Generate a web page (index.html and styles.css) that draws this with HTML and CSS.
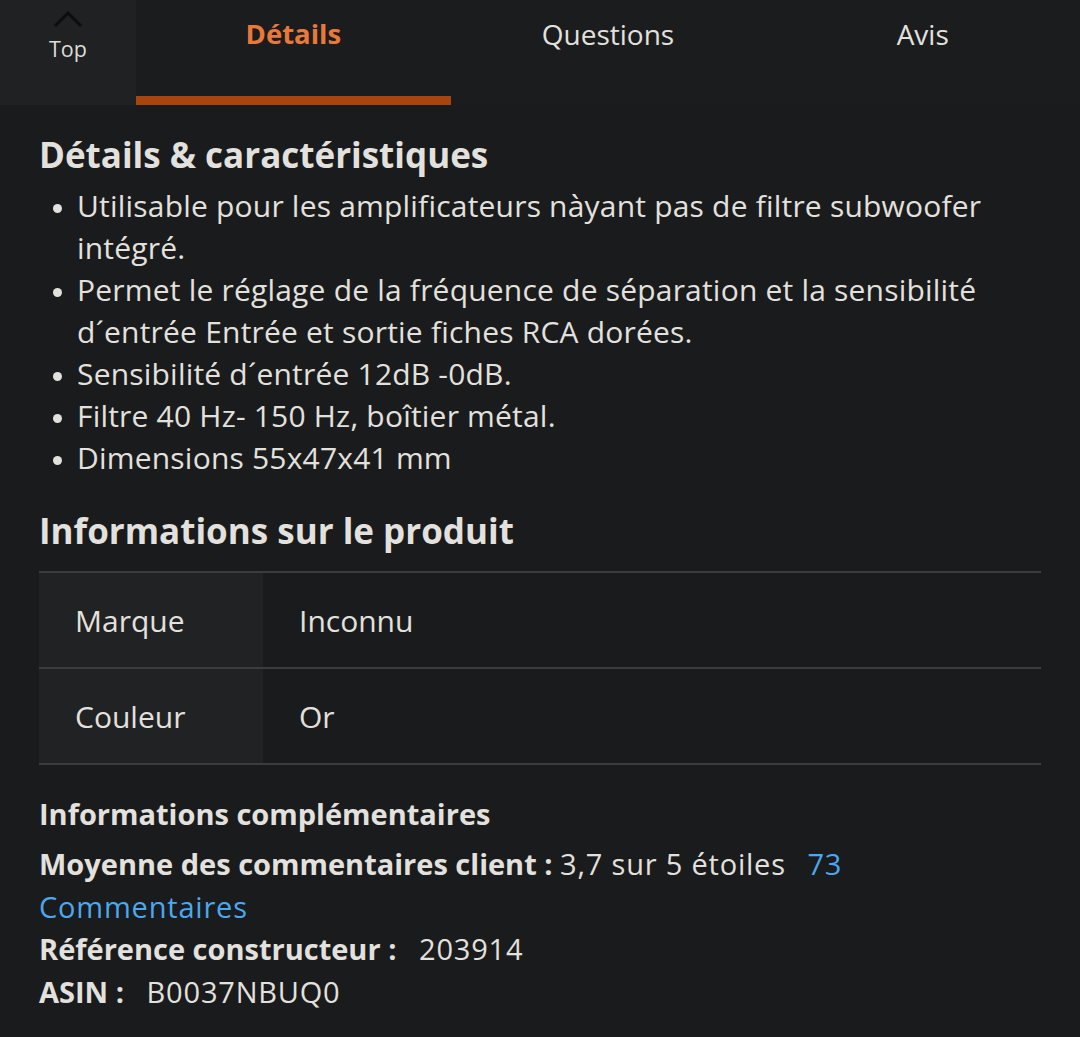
FILE: index.html
```html
<!DOCTYPE html>
<html lang="fr">
<head>
  <meta charset="UTF-8">
  <meta name="viewport" content="width=device-width, initial-scale=1.0">
  <title>Détails du produit</title>
  <link rel="stylesheet" href="styles.css">
</head>
<body>
  <!-- Barre d'onglets -->
  <div class="tabbar">
    <div class="top-btn">
      <svg class="chevron" width="32" height="20" viewBox="0 0 32 20">
        <path d="M3 18 L16 5 L29 18" fill="none" stroke="#0c0d0e" stroke-width="3"/>
      </svg>
      <span>Top</span>
    </div>
    <div class="tab active">Détails</div>
    <div class="tab">Questions</div>
    <div class="tab">Avis</div>
  </div>

  <div class="content">
    <h2>Détails &amp; caractéristiques</h2>
    <ul class="features">
      <li>Utilisable pour les amplificateurs nàyant pas de filtre subwoofer intégré.</li>
      <li>Permet le réglage de la fréquence de séparation et la sensibilité <span class="nowrap">d´entrée</span> Entrée et sortie fiches RCA dorées.</li>
      <li>Sensibilité d´entrée 12dB -0dB.</li>
      <li>Filtre 40 Hz- 150 Hz, boîtier métal.</li>
      <li>Dimensions 55x47x41 mm</li>
    </ul>

    <h2 class="info-title">Informations sur le produit</h2>
    <table class="specs">
      <tr><th>Marque</th><td>Inconnu</td></tr>
      <tr><th>Couleur</th><td>Or</td></tr>
    </table>

    <div class="extra">
      <h3>Informations complémentaires</h3>
      <p><b>Moyenne des commentaires client :</b> <span class="val">3,7 sur 5 étoiles</span> <a href="#" class="val link">73</a> <a href="#" class="val">Commentaires</a></p>
      <p><b>Référence constructeur :</b> &nbsp; <span class="val">203914</span></p>
      <p><b>ASIN :</b> &nbsp; <span class="val">B0037NBUQ0</span></p>
    </div>
  </div>
</body>
</html>
```

FILE: styles.css
```css
body {
  margin: 0;
  padding: 0;
  background: #1a1b1d;
  color: #e3e1de;
  font-family: 'Open Sans', sans-serif;
  overflow: hidden;
}

/* Onglets */
.tabbar {
  display: flex;
  height: 105px;
  background: #1b1c1e;
}

.top-btn {
  width: 136px;
  background: #1f2123;
  display: flex;
  flex-direction: column;
  align-items: center;
  padding-top: 8px;
  box-sizing: border-box;
}

.top-btn span {
  font-size: 21.5px;
  color: #dedcd9;
  line-height: 26px;
  margin-top: 8px;
}

.tab {
  flex: 1;
  text-align: center;
  font-size: 28px;
  line-height: 28px;
  padding-top: 20px;
  color: #e3e1de;
  box-sizing: border-box;
}

.tab.active {
  color: #e8793a;
  font-weight: 700;
  font-size: 27.5px;
  border-bottom: 9px solid #a8450f;
}

/* Contenu */
.content {
  padding: 0 39px;
}

h2 {
  font-size: 35px;
  font-weight: 700;
  margin: 0;
  line-height: 48px;
  padding-top: 26px;
}

.features {
  margin: 6px 0 0;
  padding-left: 38px;
  font-size: 30px;
  letter-spacing: 0.2px;
  line-height: 42px;
}

.features li::marker {
  font-size: 24px;
}

.nowrap {
  white-space: nowrap;
}

.info-title {
  padding-top: 28px;
  padding-bottom: 16px;
}

.specs {
  width: 100%;
  border-collapse: collapse;
  border-top: 2px solid #3a3c3e;
}

.specs tr {
  border-bottom: 2px solid #3a3c3e;
  height: 96px;
}

.specs th {
  width: 224px;
  background: #202224;
  text-align: left;
  font-weight: 400;
  font-size: 30px;
  padding: 0 36px;
  box-sizing: border-box;
}

.specs td {
  font-size: 30px;
  padding: 0 36px;
}

.extra {
  padding-top: 28px;
  font-size: 29px;
  line-height: 42.5px;
}

.extra h3 {
  font-size: 29px;
  margin: 0 0 8px;
  line-height: 42px;
}

.extra p {
  margin: 0;
}

.extra .val {
  letter-spacing: 0.8px;
}

.extra a {
  color: #4ba8ee;
  text-decoration: none;
}

.extra .link {
  margin-left: 14px;
}
```
